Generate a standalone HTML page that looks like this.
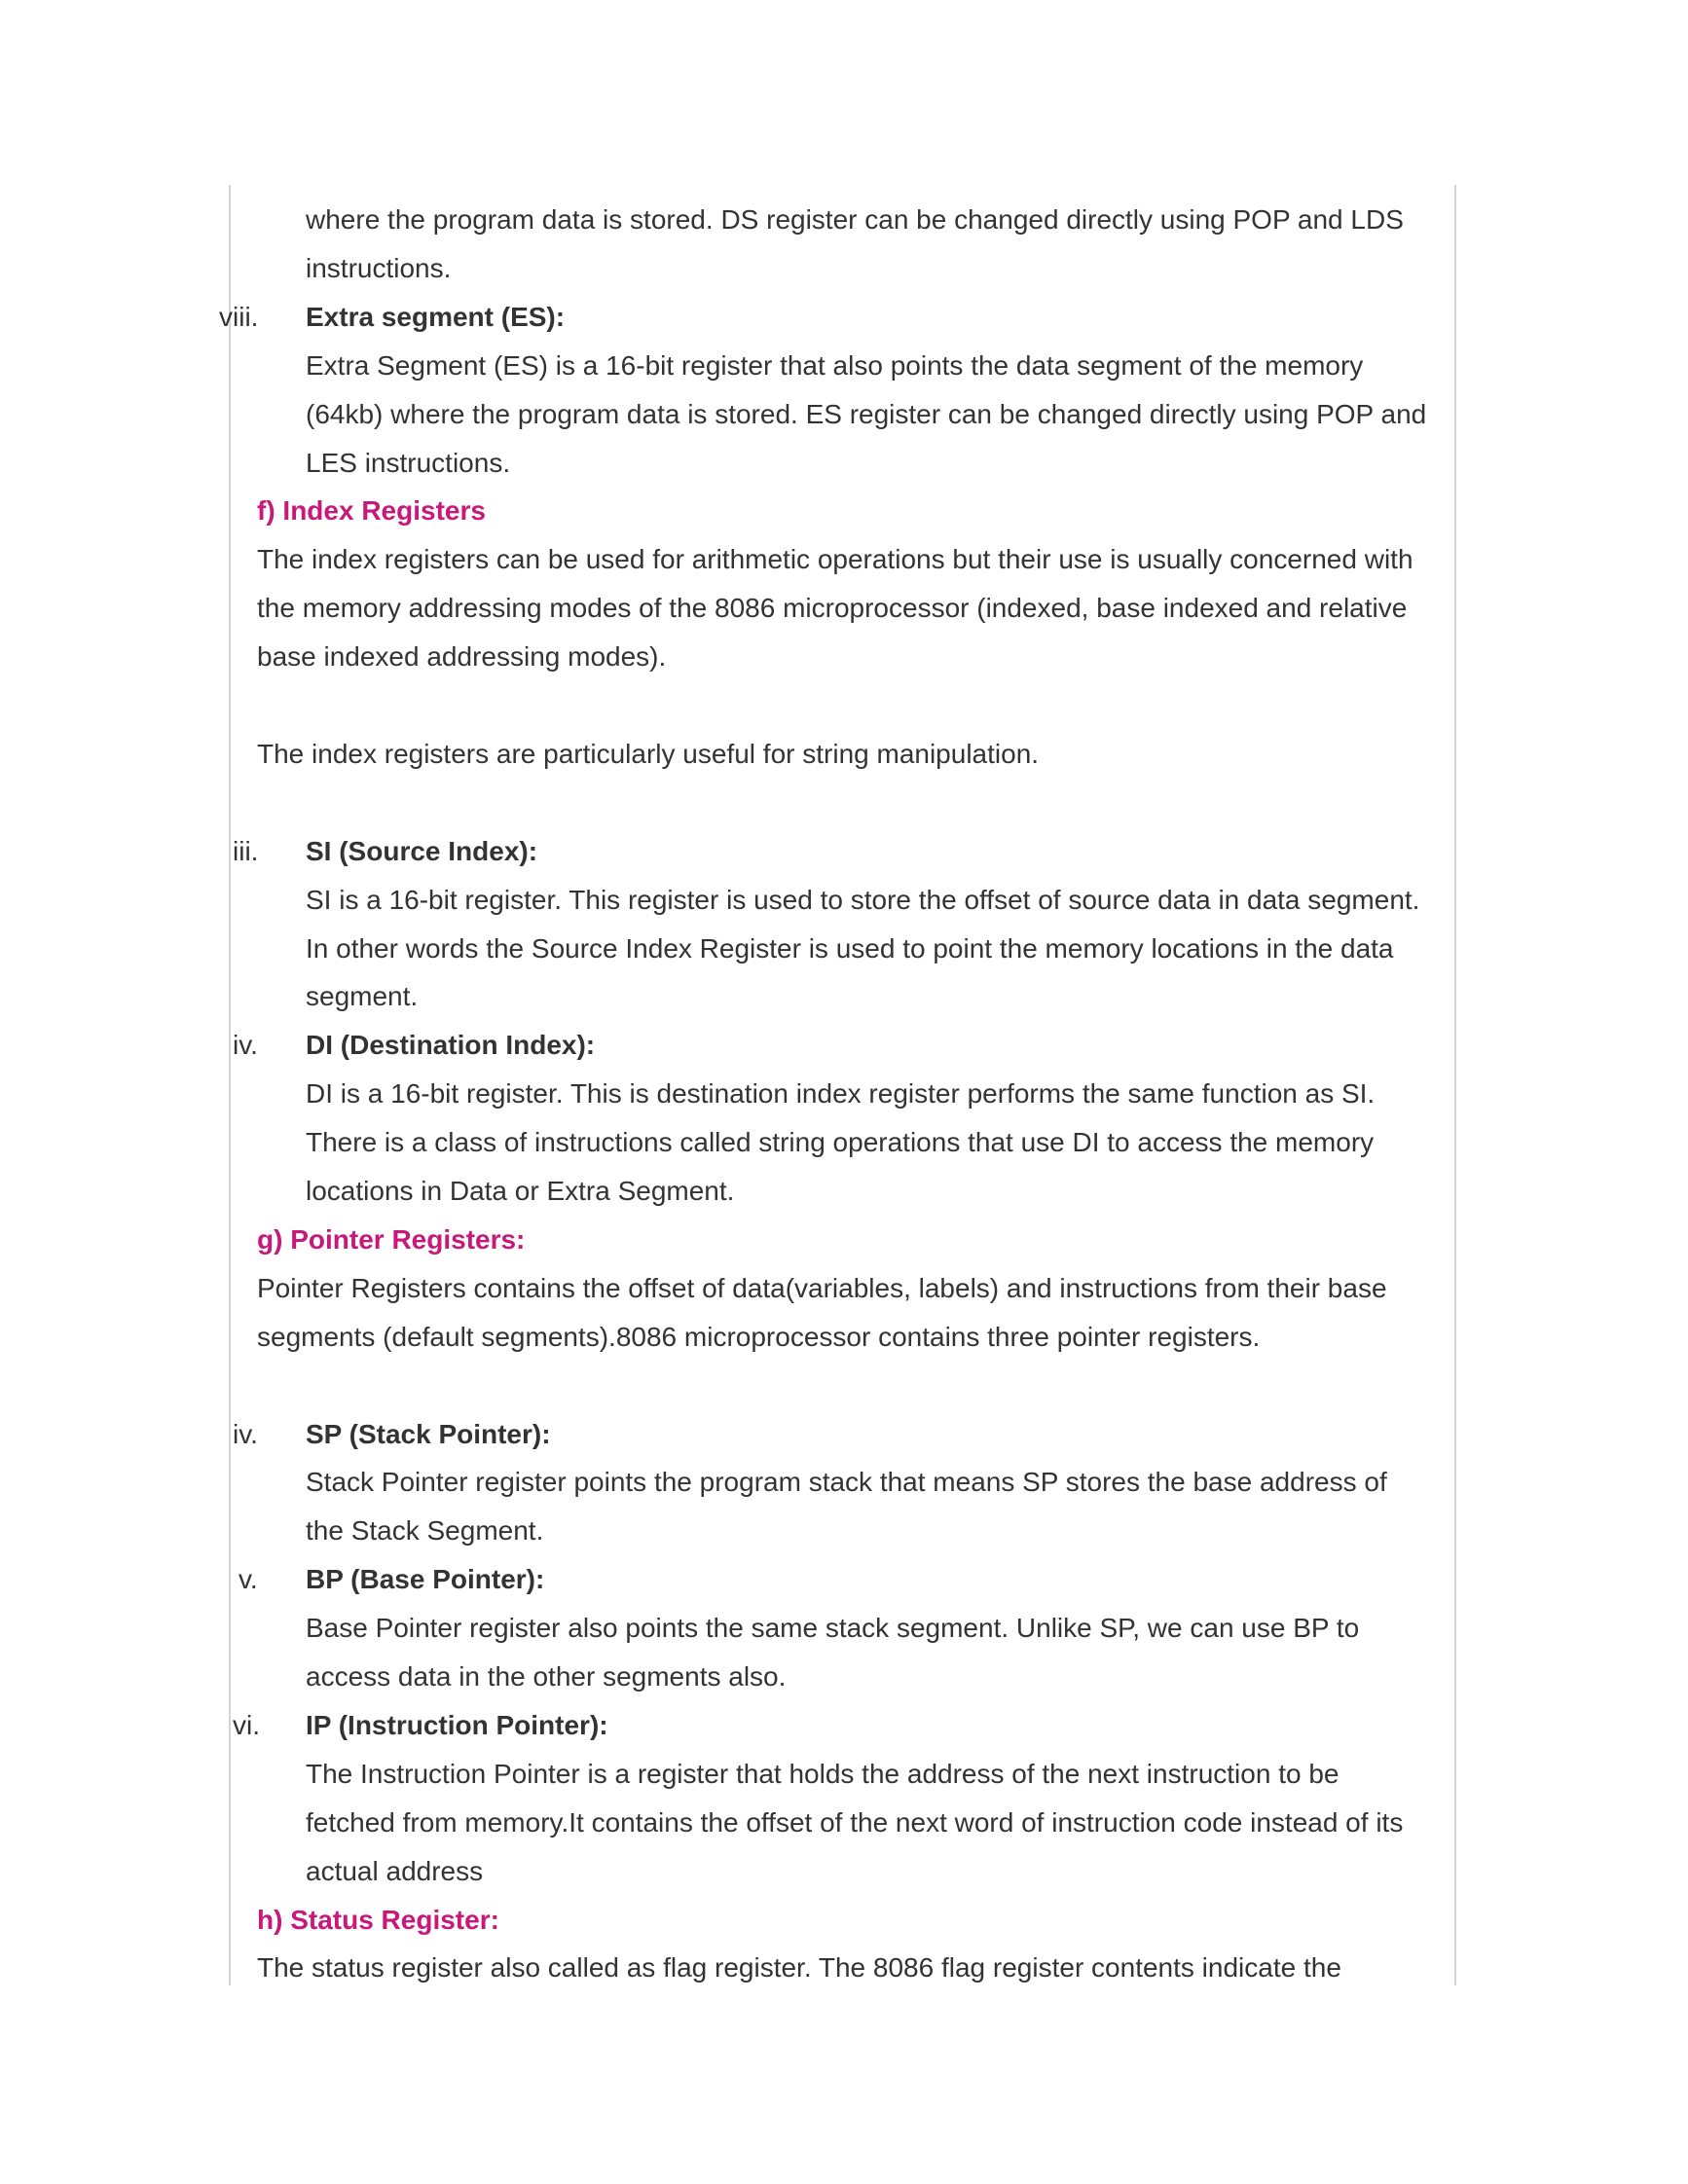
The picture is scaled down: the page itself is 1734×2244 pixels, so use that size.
<!DOCTYPE html>
<html><head><meta charset="utf-8"><style>
html,body{margin:0;padding:0;background:#fff;}
body{width:1734px;height:2244px;position:relative;overflow:hidden;font-family:"Liberation Sans",Arial,sans-serif;color:#333;}
.bl{position:absolute;top:190px;height:1850px;width:2px;background:#d4d4d4;}
.l{position:absolute;font-size:28px;line-height:49.9px;height:49.9px;white-space:nowrap;}
.t{left:314px}.h{left:264px;color:#c8187a;font-weight:bold}.p{left:264px}
b{font-weight:bold;color:#333}
</style></head><body>
<div class="bl" style="left:235px"></div>
<div class="bl" style="left:1494px"></div>
<div class="l t" style="top:201px">where the program data is stored. DS register can be changed directly using POP and LDS</div>
<div class="l t" style="top:250.9px">instructions.</div>
<div class="l" style="top:300.8px;left:225px">viii.</div>
<div class="l t" style="top:300.8px"><b>Extra segment (ES):</b></div>
<div class="l t" style="top:350.7px">Extra Segment (ES) is a 16-bit register that also points the data segment of the memory</div>
<div class="l t" style="top:400.6px">(64kb) where the program data is stored. ES register can be changed directly using POP and</div>
<div class="l t" style="top:450.5px">LES instructions.</div>
<div class="l h" style="top:500.4px">f) Index Registers</div>
<div class="l p" style="top:550.3px">The index registers can be used for arithmetic operations but their use is usually concerned with</div>
<div class="l p" style="top:600.2px">the memory addressing modes of the 8086 microprocessor (indexed, base indexed and relative</div>
<div class="l p" style="top:650.1px">base indexed addressing modes).</div>
<div class="l p" style="top:749.9px">The index registers are particularly useful for string manipulation.</div>
<div class="l" style="top:849.7px;left:239px">iii.</div>
<div class="l t" style="top:849.7px"><b>SI (Source Index):</b></div>
<div class="l t" style="top:899.6px">SI is a 16-bit register. This register is used to store the offset of source data in data segment.</div>
<div class="l t" style="top:949.5px">In other words the Source Index Register is used to point the memory locations in the data</div>
<div class="l t" style="top:999.4px">segment.</div>
<div class="l" style="top:1049.3px;left:239px">iv.</div>
<div class="l t" style="top:1049.3px"><b>DI (Destination Index):</b></div>
<div class="l t" style="top:1099.2px">DI is a 16-bit register. This is destination index register performs the same function as SI.</div>
<div class="l t" style="top:1149.1px">There is a class of instructions called string operations that use DI to access the memory</div>
<div class="l t" style="top:1199px">locations in Data or Extra Segment.</div>
<div class="l h" style="top:1248.9px">g) Pointer Registers:</div>
<div class="l p" style="top:1298.8px">Pointer Registers contains the offset of data(variables, labels) and instructions from their base</div>
<div class="l p" style="top:1348.7px">segments (default segments).8086 microprocessor contains three pointer registers.</div>
<div class="l" style="top:1448.5px;left:239px">iv.</div>
<div class="l t" style="top:1448.5px"><b>SP (Stack Pointer):</b></div>
<div class="l t" style="top:1498.4px">Stack Pointer register points the program stack that means SP stores the base address of</div>
<div class="l t" style="top:1548.3px">the Stack Segment.</div>
<div class="l" style="top:1598.2px;left:245px">v.</div>
<div class="l t" style="top:1598.2px"><b>BP (Base Pointer):</b></div>
<div class="l t" style="top:1648.1px">Base Pointer register also points the same stack segment. Unlike SP, we can use BP to</div>
<div class="l t" style="top:1698px">access data in the other segments also.</div>
<div class="l" style="top:1747.9px;left:239px">vi.</div>
<div class="l t" style="top:1747.9px"><b>IP (Instruction Pointer):</b></div>
<div class="l t" style="top:1797.8px">The Instruction Pointer is a register that holds the address of the next instruction to be</div>
<div class="l t" style="top:1847.7px">fetched from memory.It contains the offset of the next word of instruction code instead of its</div>
<div class="l t" style="top:1897.6px">actual address</div>
<div class="l h" style="top:1947.5px">h) Status Register:</div>
<div class="l p" style="top:1997.4px">The status register also called as flag register. The 8086 flag register contents indicate the</div>
</body></html>
